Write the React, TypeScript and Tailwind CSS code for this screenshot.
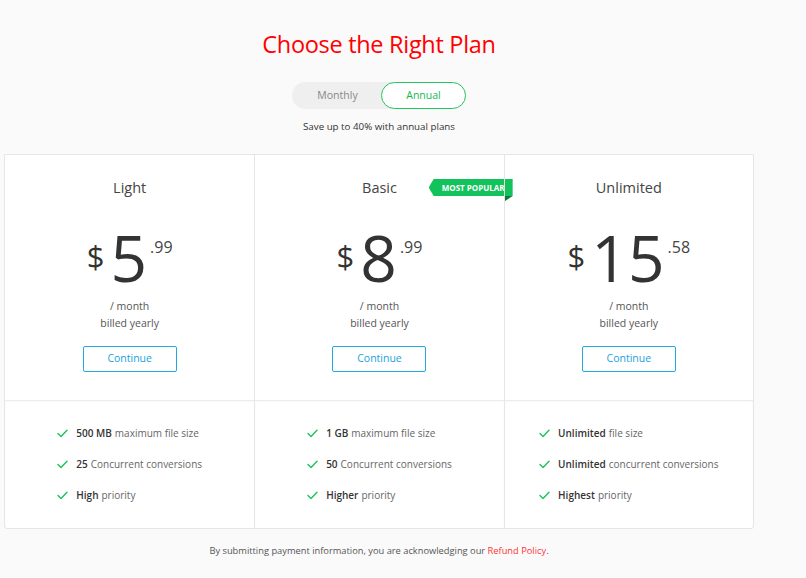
import React from "react";

type Feature = { b: string; t: string };
type Plan = { name: string; whole: string; cents: string; features: Feature[]; popular?: boolean };

const plans: Plan[] = [
  {
    name: "Light",
    whole: "5",
    cents: ".99",
    features: [
      { b: "500 MB", t: "maximum file size" },
      { b: "25", t: "Concurrent conversions" },
      { b: "High", t: "priority" },
    ],
  },
  {
    name: "Basic",
    whole: "8",
    cents: ".99",
    popular: true,
    features: [
      { b: "1 GB", t: "maximum file size" },
      { b: "50", t: "Concurrent conversions" },
      { b: "Higher", t: "priority" },
    ],
  },
  {
    name: "Unlimited",
    whole: "15",
    cents: ".58",
    features: [
      { b: "Unlimited", t: "file size" },
      { b: "Unlimited", t: "concurrent conversions" },
      { b: "Highest", t: "priority" },
    ],
  },
];

function Check() {
  return (
    <svg width="11" height="9" viewBox="0 0 11 9" className="mr-[8px] shrink-0">
      <path d="M1 4.6 L4 7.4 L10 1.2" fill="none" stroke="#19c25a" strokeWidth="1.4" strokeLinecap="round" strokeLinejoin="round" />
    </svg>
  );
}

function Badge() {
  return (
    <div className="absolute right-[-9px] top-[24px] w-[84px] h-[23px]">
      <div
        className="absolute left-0 top-0 w-[84px] h-[17px] bg-[#12c35b] flex items-center justify-center pl-[5px] text-white font-bold text-[8px]"
        style={{ clipPath: "polygon(5px 0, 100% 0, 100% 100%, 5px 100%, 0 50%)" }}
      >
        MOST POPULAR
      </div>
      <div
        className="absolute right-0 top-[17px] w-[9px] h-[6px] bg-[#0a7a38]"
        style={{ clipPath: "polygon(0 0, 100% 0, 0 100%)" }}
      />
    </div>
  );
}

export default function App() {
  return (
    <div
      className="w-[806px] h-[578px] bg-[#fafafa] text-[#333] overflow-hidden"
      style={{ fontFamily: "'Open Sans', 'Noto Sans', sans-serif" }}
    >
      <div className="w-[750px] ml-[4px] flex flex-col items-center">
        <h1 className="mt-[28px] text-[23.5px] leading-[32px] text-[#ff0000] tracking-[-0.3px]">Choose the Right Plan</h1>

        <div className="mt-[22px] w-[174px] h-[27px] rounded-full bg-[#efefef] flex items-center text-[10.5px]">
          <div className="flex-1 text-center text-[#888] pl-[2px]">Monthly</div>
          <div className="w-[85px] h-[27px] rounded-full bg-white border border-[#22c55e] text-[#15b84f] flex items-center justify-center">
            Annual
          </div>
        </div>

        <p className="mt-[10px] text-[9.75px] leading-[16px] text-[#333]">Save up to 40% with annual plans</p>

        <div className="mt-[19px] w-[750px] bg-white border border-[#e6e6e6] rounded-b-[3px] grid grid-cols-3">
          {plans.map((p, i) => (
            <div key={p.name} className={`relative flex flex-col ${i > 0 ? "border-l border-[#e6e6e6]" : ""}`}>
              {p.popular && <Badge />}
              <div className="flex flex-col items-center pt-[23px] h-[245px]">
                <div className="text-[14.5px] leading-[20px] text-[#444]">{p.name}</div>
                <div className="mt-[28px] flex items-start justify-center text-[#333]">
                  <span className="text-[31px] leading-[31px] mt-[15px] mr-[6px]">$</span>
                  <span className="text-[64px] leading-[64px]">{p.whole}</span>
                  <span className="text-[16px] leading-[16px] mt-[13px] ml-[3px] text-[#444]">{p.cents}</span>
                </div>
                <div className="mt-[8px] text-[10.5px] leading-[17px] text-[#555] text-center">
                  <div>/ month</div>
                  <div>billed yearly</div>
                </div>
                <button className="mt-[14px] w-[94px] h-[26px] border border-[#22a9e0] rounded-[2px] text-[10.5px] text-[#1aa3dc] bg-white">
                  Continue
                </button>
              </div>
              <div className="border-t border-[#ececec] shadow-[inset_0_1px_2px_rgba(0,0,0,0.03)] flex justify-center pt-[24px] pb-[24px]">
                <div className="flex flex-col gap-[14px]">
                  {p.features.map((f, j) => (
                    <div key={j} className="flex items-center text-[10px] leading-[17px]">
                      <Check />
                      <span className="font-semibold text-[#333] mr-[3px]">{f.b}</span>
                      <span className="text-[#666]">{f.t}</span>
                    </div>
                  ))}
                </div>
              </div>
            </div>
          ))}
        </div>

        <p className="mt-[14px] text-[9.3px] leading-[16px] text-[#555]">
          By submitting payment information, you are acknowledging our <span className="text-[#ff3333]">Refund Policy</span>.
        </p>
      </div>
    </div>
  );
}
